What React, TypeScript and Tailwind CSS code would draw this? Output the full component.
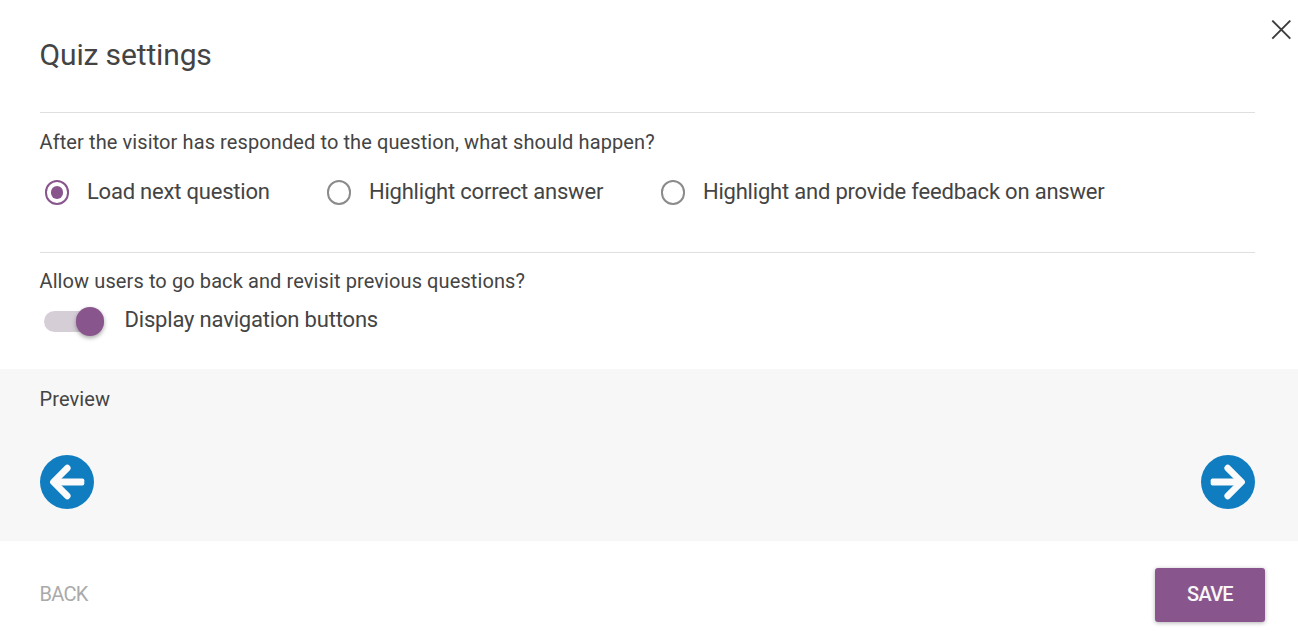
import { useState } from "react";

const afterAnswer = [
  { id: "next", label: "Load next question", width: "w-[282px]" },
  { id: "highlight", label: "Highlight correct answer", width: "w-[334px]" },
  { id: "feedback", label: "Highlight and provide feedback on answer", width: "" },
];

function ArrowButton({ direction }: { direction: "left" | "right" }) {
  return (
    <button
      type="button"
      aria-label={direction === "left" ? "Previous question" : "Next question"}
      className="size-[54px] rounded-full bg-[#107dc1]"
    >
      <svg
        viewBox="0 0 54 54"
        className={direction === "left" ? "size-full" : "size-full -scale-x-100"}
        fill="none"
        stroke="#fafafa"
      >
        <path d="M27.3 13.1 13.4 27l13.9 13.9" strokeWidth="6.6" strokeLinecap="round" strokeLinejoin="round" />
        <rect x="14" y="23.5" width="30.3" height="7" rx="1.8" fill="#fafafa" stroke="none" />
      </svg>
    </button>
  );
}

export default function App() {
  const [selected, setSelected] = useState("next");
  const [navigation, setNavigation] = useState(true);

  return (
    <main className="flex h-[635px] w-[1298px] flex-col overflow-hidden bg-white font-['Roboto',sans-serif] text-[#444]">
      <header className="flex h-28 shrink-0 justify-between pl-[39.5px] pr-[7px]">
        <h1 className="pt-[37px] text-[30px] leading-9 tracking-[-0.14px]">Quiz settings</h1>
        <button type="button" aria-label="Close" className="mt-5 size-5">
          <svg viewBox="0 0 20 20" className="size-full" fill="none" stroke="#3c3c3c" strokeWidth="1.9">
            <path d="m1.3.6 18 18M19.3.6l-18 18" />
          </svg>
        </button>
      </header>

      <section className="ml-[39.5px] mr-[43px] h-[140px] shrink-0 border-t border-[#dfdfdf] pt-[17px]">
        <h2 className="text-[20px] leading-6 tracking-[0.1px]">
          After the visitor has responded to the question, what should happen?
        </h2>
        <div className="mt-6 flex" role="radiogroup">
          {afterAnswer.map((option) => (
            <button
              key={option.id}
              type="button"
              role="radio"
              aria-checked={selected === option.id}
              onClick={() => setSelected(option.id)}
              className={`flex items-start gap-[18px] whitespace-nowrap pl-[5px] text-left ${option.width}`}
            >
              <span
                className={`mt-[2px] flex h-[25px] w-[24.4px] shrink-0 items-center justify-center rounded-full border-2 ${
                  selected === option.id ? "border-[#89558d]" : "border-[#8b8b8b]"
                }`}
              >
                {selected === option.id && <span className="h-[13px] w-[12.4px] rounded-full bg-[#89558d]" />}
              </span>
              <span className="mt-px text-[22px] leading-[26px] tracking-[-0.2px]">{option.label}</span>
            </button>
          ))}
        </div>
      </section>

      <section className="ml-[39.5px] mr-[43px] h-[117px] shrink-0 border-t border-[#dfdfdf] pt-4">
        <h2 className="text-[20px] leading-6 tracking-[0.1px]">
          Allow users to go back and revisit previous questions?
        </h2>
        <button
          type="button"
          role="switch"
          aria-checked={navigation}
          onClick={() => setNavigation(!navigation)}
          className="mt-[13px] flex items-start gap-[20.5px] pl-[4.5px]"
        >
          <span
            className={`mt-[5px] flex h-[21px] w-[60px] items-center rounded-full bg-[#d5ced7] ${
              navigation ? "justify-end" : "justify-start"
            }`}
          >
            <span className="h-[29px] w-[28.4px] shrink-0 rounded-full bg-[#89558d] shadow-[0_2px_4px_rgba(0,0,0,0.35)]" />
          </span>
          <span className="mt-px text-[22px] leading-[26px] tracking-[-0.18px]">Display navigation buttons</span>
        </button>
      </section>

      <section className="h-[172px] shrink-0 bg-[#f7f7f7] pl-[39.5px] pr-[43px] pt-[18px]">
        <h2 className="text-[20px] leading-6 tracking-[0.11px]">Preview</h2>
        <div className="mt-11 flex justify-between">
          <ArrowButton direction="left" />
          <ArrowButton direction="right" />
        </div>
      </section>

      <footer className="flex justify-between pl-[39.5px] pr-[33px] pt-[27px]">
        <button type="button" className="h-[54px] pb-[2px] text-[20px] tracking-[-0.75px] text-[#aaa]">
          BACK
        </button>
        <button
          type="button"
          className="h-[54px] w-[110px] rounded-[3px] bg-[#89558d] pb-[2px] text-[20px] font-medium tracking-[-0.75px] text-[#f7f7f7] shadow-[0_1px_4px_rgba(0,0,0,0.3)]"
        >
          SAVE
        </button>
      </footer>
    </main>
  );
}
